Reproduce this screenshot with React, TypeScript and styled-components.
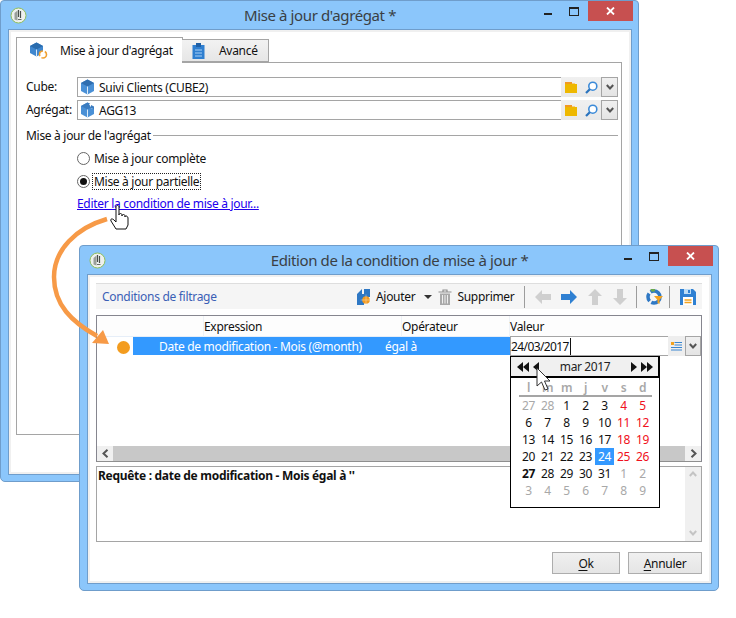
import React from "react";
import styled, { createGlobalStyle } from "styled-components";

const GlobalStyle = createGlobalStyle`
  html, body {
    margin: 0;
    padding: 0;
    background: #fff;
  }
  body {
    font-family: "Noto Sans", "Open Sans", sans-serif;
    font-size: 12px;
    letter-spacing: -0.3px;
    color: #111;
  }
`;

const Desktop = styled.div`
  position: relative;
  width: 736px;
  height: 618px;
  overflow: hidden;
`;

const Window = styled.div<{ $left: number; $top: number; $width: number; $height: number }>`
  position: absolute;
  left: ${(p) => p.$left}px;
  top: ${(p) => p.$top}px;
  width: ${(p) => p.$width}px;
  height: ${(p) => p.$height}px;
  box-sizing: border-box;
  display: flex;
  flex-direction: column;
  padding: 0 6px 6px 7px;
  background: #8bc6fb;
  border: 1px solid #6f9dcb;
  border-radius: 4px 4px 5px 5px;
`;

const TitleBar = styled.div`
  position: relative;
  flex: 0 0 28px;
  display: flex;
  align-items: center;
  justify-content: center;
`;

const TitleText = styled.div`
  font-size: 15px;
  letter-spacing: -0.38px;
  color: #3a3f44;
  margin-top: -1px;
`;

const AppBadge = styled.svg`
  position: absolute;
  left: 2px;
  top: 6px;
`;

const Controls = styled.div`
  position: absolute;
  right: -1px;
  top: 0;
  display: flex;
  align-items: flex-start;
`;

const MinBtn = styled.div`
  width: 8px;
  height: 2px;
  margin: 12px 17px 0 0;
  background: #222;
`;

const MaxBtn = styled.div`
  width: 8px;
  height: 6px;
  margin: 6px 9px 0 0;
  border: 1px solid #222;
  border-top-width: 2px;
`;

const CloseBtn = styled.div`
  width: 45px;
  height: 20px;
  background: #c75050;
  color: #fff;
  display: flex;
  align-items: center;
  justify-content: center;
`;

const Client = styled.div`
  flex: 1;
  min-height: 0;
  box-sizing: border-box;
  display: flex;
  flex-direction: column;
  background: #fff;
  border: 1px solid #6f9dcb;
  outline: 2px solid #f0f0f0;
  outline-offset: -3px;
`;

const TabArea = styled.div`
  flex: 1;
  display: flex;
  flex-direction: column;
  padding: 7px 9px 39px 7px;
  min-height: 0;
`;

const TabStrip = styled.div`
  display: flex;
  align-items: flex-end;
  height: 25px;
  position: relative;
  z-index: 1;
`;

const Tab = styled.div<{ $active?: boolean }>`
  box-sizing: border-box;
  display: flex;
  align-items: center;
  height: ${(p) => (p.$active ? 26 : 23)}px;
  width: ${(p) => (p.$active ? 167 : 87)}px;
  margin-bottom: ${(p) => (p.$active ? -1 : 0)}px;
  margin-right: ${(p) => (p.$active ? -1 : 0)}px;
  padding-left: ${(p) => (p.$active ? 13 : 10)}px;
  gap: ${(p) => (p.$active ? 12 : 14)}px;
  border: 1px solid #a5a5a5;
  border-bottom: ${(p) => (p.$active ? "0" : "1px solid #a5a5a5")};
  background: ${(p) => (p.$active ? "#fff" : "linear-gradient(#f2f2f2, #e6e6e6)")};
  border-left-width: ${(p) => (p.$active ? "1px" : "0")};
`;

const TabPanel = styled.div`
  flex: 1;
  box-sizing: border-box;
  border: 1px solid #a5a5a5;
  padding: 14px 3px 0 9px;
  display: flex;
  flex-direction: column;
`;

const FieldRow = styled.div`
  display: flex;
  align-items: stretch;
  height: 20px;
  margin-bottom: 3px;
`;

const FieldLabel = styled.div`
  width: 51px;
  flex: none;
  line-height: 20px;
`;

const FieldInput = styled.div`
  flex: 1;
  box-sizing: border-box;
  display: flex;
  align-items: center;
  gap: 4px;
  padding-left: 2px;
  border: 1px solid #a5a5a5;
  border-right: 0;
`;

const FieldTools = styled.div`
  width: 40px;
  flex: none;
  display: flex;
  align-items: center;
  gap: 8px;
  padding-left: 4px;
  box-sizing: border-box;
  background: linear-gradient(#f0f0f0, #e9e9e9);
`;

const DropButton = styled.div<{ $w?: number }>`
  width: ${(p) => p.$w ?? 17}px;
  flex: none;
  box-sizing: border-box;
  display: flex;
  align-items: center;
  justify-content: center;
  border: 1px solid #a5a5a5;
  background: linear-gradient(#f0f0f0, #e4e4e4);
`;

const SectionTitle = styled.div`
  display: flex;
  align-items: center;
  gap: 2px;
  height: 18px;
  margin-top: 3px;
  &::after {
    content: "";
    flex: 1;
    height: 1px;
    margin-top: 1px;
    background: #a5a5a5;
  }
`;

const Options = styled.div`
  display: flex;
  flex-direction: column;
  align-items: flex-start;
  padding: 3px 0 0 51px;
`;

const RadioRow = styled.div`
  display: flex;
  align-items: center;
  height: 23px;
  gap: 2px;
`;

const RadioDot = styled.span<{ $checked?: boolean }>`
  width: 13px;
  height: 13px;
  box-sizing: border-box;
  border-radius: 50%;
  border: 1px solid #666;
  background: #fff;
  display: flex;
  align-items: center;
  justify-content: center;
  &::after {
    content: "";
    width: 7px;
    height: 7px;
    border-radius: 50%;
    background: ${(p) => (p.$checked ? "#111" : "transparent")};
  }
`;

const RadioLabel = styled.span<{ $focused?: boolean }>`
  padding: 0 1px;
  line-height: 15px;
  border: 1px dotted ${(p) => (p.$focused ? "#222" : "transparent")};
`;

const LinkText = styled.a`
  margin-top: 1px;
  color: #2200ee;
  text-decoration: underline;
  line-height: 19px;
`;

const DialogBody = styled.div`
  flex: 1;
  display: flex;
  flex-direction: column;
  padding: 8px 9px 9px 8px;
  min-height: 0;
`;

const Toolbar = styled.div`
  position: relative;
  height: 26px;
  flex: none;
  box-sizing: border-box;
  display: flex;
  align-items: center;
  padding-left: 6px;
  background: #f5f5f5;
  border-top: 1px solid #dedede;
`;

const ToolbarTitle = styled.div`
  color: #3b5fb5;
  width: 255px;
`;

const ToolItem = styled.div<{ $gap?: number; $ml?: number }>`
  display: flex;
  align-items: center;
  gap: ${(p) => p.$gap ?? 5}px;
  margin-left: ${(p) => p.$ml ?? 0}px;
`;

const ToolSep = styled.div<{ $ml: number }>`
  width: 1px;
  height: 22px;
  margin-left: ${(p) => p.$ml}px;
  background: #9c9c9c;
`;

const ListBox = styled.div`
  position: relative;
  margin-top: 6px;
  height: 147px;
  flex: none;
  box-sizing: border-box;
  border: 1px solid #86868f;
  border-bottom-color: #8f8f8f;
  display: flex;
  flex-direction: column;
`;

const ListHead = styled.div`
  height: 20px;
  flex: none;
  display: grid;
  grid-template-columns: 106px 198px 108px 1fr;
  border-bottom: 1px solid #e6eef8;
  background: #fdfdfd;
`;

const HeadCell = styled.div`
  line-height: 22px;
  border-left: 1px solid #eef2f7;
  &:first-child {
    border-left: 0;
  }
`;

const ListRow = styled.div`
  height: 20px;
  flex: none;
  display: flex;
  align-items: stretch;
`;

const StatusCell = styled.div`
  width: 36px;
  flex: none;
  display: flex;
  align-items: center;
  justify-content: flex-end;
  padding-right: 3px;
  box-sizing: border-box;
  &::after {
    content: "";
    width: 13px;
    height: 13px;
    border-radius: 50%;
    background: #f39c1f;
  }
`;

const SelectedCell = styled.div`
  width: 377px;
  height: 18px;
  flex: none;
  box-sizing: border-box;
  display: flex;
  align-items: center;
  padding-left: 26px;
  background: #3399ff;
  color: #fff;
`;

const SelectedName = styled.span`
  width: 226px;
  flex: none;
`;

const ValueEditor = styled.div`
  flex: 1;
  display: flex;
  align-items: stretch;
  margin-top: -1px;
  height: 20px;
`;

const ValueInput = styled.div`
  width: 158px;
  flex: none;
  box-sizing: border-box;
  display: flex;
  align-items: center;
  border: 1px solid #a5a5a5;
  border-right: 0;
  letter-spacing: -0.6px;
`;

const Caret = styled.span`
  width: 1px;
  height: 17px;
  margin-left: 1px;
  background: #111;
`;

const ValueTools = styled.div`
  flex: 1;
  display: flex;
  align-items: center;
  padding-left: 3px;
  background: #eeeeee;
`;

const ListFiller = styled.div`
  flex: 1;
`;

const HScroll = styled.div`
  height: 15px;
  flex: none;
  display: flex;
  align-items: stretch;
  background: #c8c8c8;
`;

const ScrollEnd = styled.div`
  width: 16px;
  flex: none;
  display: flex;
  align-items: center;
  justify-content: center;
  background: #f0f0f0;
`;

const ScrollTrack = styled.div`
  flex: 1;
`;

const QueryBox = styled.div`
  margin-top: 4px;
  height: 76px;
  flex: none;
  box-sizing: border-box;
  border: 1px solid #a5a5a5;
  display: flex;
`;

const QueryText = styled.div`
  flex: 1;
  padding: 1px 0 0 1px;
  font-weight: 700;
  line-height: 15px;
`;

const VScroll = styled.div`
  width: 16px;
  flex: none;
  display: flex;
  flex-direction: column;
  align-items: center;
  justify-content: space-between;
  padding: 4px 0 5px;
  box-sizing: border-box;
  background: #f0f0f0;
`;

const DialogActions = styled.div`
  display: flex;
  justify-content: flex-end;
  gap: 8px;
  margin-top: 10px;
`;

const ActionButton = styled.button<{ $w: number }>`
  width: ${(p) => p.$w}px;
  height: 22px;
  padding: 0;
  box-sizing: border-box;
  font: inherit;
  letter-spacing: inherit;
  color: #111;
  border: 1px solid #adadad;
  background: linear-gradient(#f0f0f0, #e5e5e5);
  & u {
    text-underline-offset: 2px;
  }
`;

const Calendar = styled.div`
  position: absolute;
  left: 413px;
  top: 40px;
  width: 150px;
  height: 152px;
  box-sizing: border-box;
  background: #fff;
  border: 1px solid #000;
  display: flex;
  flex-direction: column;
  z-index: 2;
  letter-spacing: -0.4px;
`;

const CalendarHead = styled.div`
  height: 21px;
  flex: none;
  box-sizing: border-box;
  display: flex;
  align-items: center;
  justify-content: space-between;
  padding: 0 5px 0 6px;
  background: #f0f0f0;
  border-bottom: 2px solid #000;
  border-right: 1px solid #000;
  color: #222;
`;

const NavGroup = styled.div`
  display: flex;
  align-items: center;
  gap: 4px;
`;

const DayGrid = styled.div`
  display: grid;
  grid-template-columns: repeat(7, 19px);
  grid-template-rows: 15px 2px repeat(6, 17px);
  padding: 2px 0 0 8px;
`;

const WeekDay = styled.div`
  display: flex;
  align-items: center;
  justify-content: center;
  color: #a8a8a8;
  font-weight: 600;
`;

const WeekRule = styled.div`
  grid-column: 1 / -1;
  background: #a5a5a5;
`;

const Day = styled.div<{ $kind?: "muted" | "weekend" | "selected" | "today" }>`
  display: flex;
  align-items: center;
  justify-content: center;
  color: ${(p) =>
    p.$kind === "muted" ? "#a8a8a8" : p.$kind === "weekend" ? "#f01020" : p.$kind === "selected" ? "#fff" : "#111"};
  background: ${(p) => (p.$kind === "selected" ? "#3399ff" : "transparent")};
  font-weight: ${(p) => (p.$kind === "today" ? 700 : 400)};
`;

const Overlay = styled.svg`
  position: absolute;
  left: 0;
  top: 0;
  pointer-events: none;
  z-index: 5;
`;

const weekDays = ["l", "m", "m", "j", "v", "s", "d"];

type DayCell = { n: number; kind?: "muted" | "weekend" | "selected" | "today" };

const days: DayCell[] = [
  { n: 27, kind: "muted" }, { n: 28, kind: "muted" }, { n: 1 }, { n: 2 }, { n: 3 }, { n: 4, kind: "weekend" }, { n: 5, kind: "weekend" },
  { n: 6 }, { n: 7 }, { n: 8 }, { n: 9 }, { n: 10 }, { n: 11, kind: "weekend" }, { n: 12, kind: "weekend" },
  { n: 13 }, { n: 14 }, { n: 15 }, { n: 16 }, { n: 17 }, { n: 18, kind: "weekend" }, { n: 19, kind: "weekend" },
  { n: 20 }, { n: 21 }, { n: 22 }, { n: 23 }, { n: 24, kind: "selected" }, { n: 25, kind: "weekend" }, { n: 26, kind: "weekend" },
  { n: 27, kind: "today" }, { n: 28 }, { n: 29 }, { n: 30 }, { n: 31 }, { n: 1, kind: "muted" }, { n: 2, kind: "muted" },
  { n: 3, kind: "muted" }, { n: 4, kind: "muted" }, { n: 5, kind: "muted" }, { n: 6, kind: "muted" }, { n: 7, kind: "muted" }, { n: 8, kind: "muted" }, { n: 9, kind: "muted" },
];

const Badge = () => (
  <AppBadge width="17" height="17" viewBox="0 0 17 17">
    <circle cx="8.5" cy="8.5" r="7.5" fill="#eef0ee" stroke="#8fbf5a" strokeWidth="1" />
    <path d="M4.500 6v6.500l3 1V3.500z" fill="#9a9f9a" />
    <path d="M8.500 3v7M10.500 4v7" stroke="#4a4f4a" strokeWidth="1.200" fill="none" />
    <path d="M8 12.500h3.500" stroke="#6a6f6a" strokeWidth="1" />
  </AppBadge>
);

const CloseIcon = () => (
  <svg width="9" height="8" viewBox="0 0 9 8">
    <path d="M1 0.5l7 7M8 0.5l-7 7" stroke="#fff" strokeWidth="1.8" />
  </svg>
);

const Controlset = () => (
  <Controls>
    <MinBtn />
    <MaxBtn />
    <CloseBtn>
      <CloseIcon />
    </CloseBtn>
  </Controls>
);

const CubeIcon = ({ broken }: { broken?: boolean }) => (
  <svg width="15" height="16" viewBox="0 0 15 16">
    <path d="M7.5 0.5L14 4v8l-6.5 3.5L1 12V4z" fill="#4a90d6" />
    <path d="M7.5 0.5L14 4l-6.5 3.5L1 4z" fill={broken ? "#3b7cc0" : "#2f6eb0"} />
    <path d="M7.5 7.5V15.5" stroke="#dcebf8" strokeWidth="1" />
    {broken && <path d="M9 2l6 0 0 4-3 1z" fill="#fff" />}
    {broken && <path d="M11 3l3 1.500v3l-3-1.500z" fill="#3b7cc0" />}
  </svg>
);

const TabCubeIcon = () => (
  <svg width="18" height="17" viewBox="0 0 18 17">
    <path d="M6.500 0.500L13 4v7l-6.500 3.500L0 11V4z" fill="#3f87cf" />
    <path d="M6.500 0.500L13 4 6.500 7.500 0 4z" fill="#2a6cae" />
    <path d="M6.500 7.500v7" stroke="#dcebf8" />
    <circle cx="13" cy="12.500" r="3.500" fill="#fff" stroke="#f0a030" strokeWidth="1.600" strokeDasharray="7 2" />
  </svg>
);

const ClipboardIcon = () => (
  <svg width="13" height="16" viewBox="0 0 13 16">
    <rect x="0.500" y="2" width="12" height="14" fill="#2f7fd0" />
    <rect x="4" y="0" width="5" height="4" fill="#1f5fa5" />
    <path d="M3 7h7M3 10h7M3 13h7" stroke="#a8d0f5" strokeWidth="1" />
  </svg>
);

const FolderIcon = () => (
  <svg width="12" height="11" viewBox="0 0 12 11">
    <path d="M0 0h7v2H0z" fill="#f19a22" />
    <path d="M7 1h3v1H7z" fill="#f6cd7a" />
    <path d="M0 2h12v9H0z" fill="#eeb800" />
  </svg>
);

const SearchIcon = () => (
  <svg width="13" height="13" viewBox="0 0 13 13">
    <circle cx="7.800" cy="5.200" r="4" fill="#fff" stroke="#3b8ad8" strokeWidth="1.600" />
    <path d="M4.800 8.200L1 12" stroke="#2a73bd" strokeWidth="2.200" />
  </svg>
);

const Chevron = ({ color = "#555", up }: { color?: string; up?: boolean }) => (
  <svg width="8" height="6" viewBox="0 0 8 6">
    <path d={up ? "M0.800 5L4 1.500 7.200 5" : "M0.800 1L4 4.500 7.200 1"} stroke={color} strokeWidth="2" fill="none" />
  </svg>
);

const SideChevron = ({ right }: { right?: boolean }) => (
  <svg width="7" height="9" viewBox="0 0 7 9">
    <path d={right ? "M1.500 0.800L5.500 4.500 1.500 8.200" : "M5.500 0.800L1.500 4.500 5.500 8.200"} stroke="#555" strokeWidth="2" fill="none" />
  </svg>
);

const AddIcon = () => (
  <svg width="14" height="16" viewBox="0 0 14 16">
    <path d="M0 5l5-5v5h2V0h6v8H7v8H0z" fill="#2f78c4" />
    <circle cx="9" cy="11" r="3.800" fill="#f39a1e" />
    <path d="M9 5.500v11M3.500 11h11" stroke="#fff" strokeWidth="0.700" opacity="0.500" />
  </svg>
);

const TrashIcon = () => (
  <svg width="14" height="16" viewBox="0 0 14 16">
    <path d="M0.500 3h13M5 3V1h4v2" stroke="#8f8f8f" strokeWidth="1.200" fill="none" />
    <path d="M2 4.500h10V16H2z" fill="#a9a9a9" />
    <path d="M4.500 6v8.500M7 6v8.500M9.500 6v8.500" stroke="#eee" strokeWidth="1" />
  </svg>
);

const CaretDown = () => (
  <svg width="8" height="4" viewBox="0 0 8 4">
    <path d="M0 0h8L4 4z" fill="#333" />
  </svg>
);

const ArrowIcon = ({ dir, color }: { dir: "left" | "right" | "up" | "down"; color: string }) => {
  const rotate = { right: 0, down: 90, left: 180, up: 270 }[dir];
  return (
    <svg width="16" height="16" viewBox="0 0 16 16">
      <path d="M0 5h9V1l7 7-7 7v-4H0z" fill={color} transform={`rotate(${rotate} 8 8)`} />
    </svg>
  );
};

const ChartFilterIcon = () => (
  <svg width="17" height="16" viewBox="0 0 17 16">
    <circle cx="8" cy="8" r="6" fill="none" stroke="#2f78c4" strokeWidth="3.500" strokeDasharray="12 2 8 2 13 2" />
    <path d="M5 1.500A7 7 0 0 1 9 1" stroke="#6aa84f" strokeWidth="3" fill="none" />
    <path d="M8 7h9l-3.500 4v4l-2-1v-3z" fill="#f3a21e" />
  </svg>
);

const SaveIcon = () => (
  <svg width="16" height="16" viewBox="0 0 16 16">
    <path d="M0 0h13l3 3v13H0z" fill="#2f80d2" />
    <path d="M4 0h7v5H4z" fill="#bcdcf6" />
    <path d="M8 1h2v3H8z" fill="#2f80d2" />
    <path d="M3 8h10v8H3z" fill="#fff" />
    <path d="M4.500 11h7M4.500 13.500h7" stroke="#f3a21e" strokeWidth="1.300" />
  </svg>
);

const ListIcon = () => (
  <svg width="11" height="10" viewBox="0 0 11 10">
    <rect x="0" y="1" width="3" height="3" fill="#f3a21e" />
    <path d="M3.500 1.500h7.500M3.500 4h7.500M0 6.500h11M0 9h11" stroke="#3a86d0" strokeWidth="1.200" />
  </svg>
);

const NavArrows = ({ dir, count }: { dir: "left" | "right"; count: number }) => (
  <svg width={count * 6} height="10" viewBox={`0 0 ${count * 6} 10`}>
    {Array.from({ length: count }).map((_, i) => (
      <path
        key={i}
        d={dir === "left" ? `M${i * 6 + 6} 0v10L${i * 6} 5z` : `M${i * 6} 0v10L${i * 6 + 6} 5z`}
        fill="#111"
      />
    ))}
  </svg>
);

export default function App() {
  return (
    <Desktop>
      <GlobalStyle />
      <Window $left={0} $top={0} $width={639} $height={482}>
        <TitleBar>
          <Badge />
          <TitleText>Mise à jour d'agrégat *</TitleText>
          <Controlset />
        </TitleBar>
        <Client>
          <TabArea>
            <TabStrip>
              <Tab $active>
                <TabCubeIcon />
                Mise à jour d'agrégat
              </Tab>
              <Tab>
                <ClipboardIcon />
                Avancé
              </Tab>
            </TabStrip>
            <TabPanel>
              <FieldRow>
                <FieldLabel>Cube:</FieldLabel>
                <FieldInput>
                  <CubeIcon />
                  Suivi Clients (CUBE2)
                </FieldInput>
                <FieldTools>
                  <FolderIcon />
                  <SearchIcon />
                </FieldTools>
                <DropButton>
                  <Chevron />
                </DropButton>
              </FieldRow>
              <FieldRow>
                <FieldLabel>Agrégat:</FieldLabel>
                <FieldInput>
                  <CubeIcon broken />
                  AGG13
                </FieldInput>
                <FieldTools>
                  <FolderIcon />
                  <SearchIcon />
                </FieldTools>
                <DropButton>
                  <Chevron />
                </DropButton>
              </FieldRow>
              <SectionTitle>Mise à jour de l'agrégat</SectionTitle>
              <Options>
                <RadioRow>
                  <RadioDot />
                  <RadioLabel>Mise à jour complète</RadioLabel>
                </RadioRow>
                <RadioRow>
                  <RadioDot $checked />
                  <RadioLabel $focused>Mise à jour partielle</RadioLabel>
                </RadioRow>
                <LinkText>Editer la condition de mise à jour...</LinkText>
              </Options>
            </TabPanel>
          </TabArea>
        </Client>
      </Window>

      <Window $left={79} $top={245} $width={640} $height={346}>
        <TitleBar>
          <Badge />
          <TitleText>Edition de la condition de mise à jour *</TitleText>
          <Controlset />
        </TitleBar>
        <Client>
          <DialogBody>
            <Toolbar>
              <ToolbarTitle>Conditions de filtrage</ToolbarTitle>
              <ToolItem>
                <AddIcon />
                Ajouter
              </ToolItem>
              <ToolItem $ml={9}>
                <CaretDown />
              </ToolItem>
              <ToolItem $ml={6}>
                <TrashIcon />
                Supprimer
              </ToolItem>
              <ToolSep $ml={10} />
              <ToolItem $ml={10}>
                <ArrowIcon dir="left" color="#cfcfcf" />
              </ToolItem>
              <ToolItem $ml={10}>
                <ArrowIcon dir="right" color="#2f80d2" />
              </ToolItem>
              <ToolItem $ml={10}>
                <ArrowIcon dir="up" color="#cfcfcf" />
              </ToolItem>
              <ToolItem $ml={9}>
                <ArrowIcon dir="down" color="#cfcfcf" />
              </ToolItem>
              <ToolSep $ml={8} />
              <ToolItem $ml={9}>
                <ChartFilterIcon />
              </ToolItem>
              <ToolSep $ml={6} />
              <ToolItem $ml={10}>
                <SaveIcon />
              </ToolItem>
            </Toolbar>
            <ListBox>
              <ListHead>
                <HeadCell />
                <HeadCell>Expression</HeadCell>
                <HeadCell>Opérateur</HeadCell>
                <HeadCell>Valeur</HeadCell>
              </ListHead>
              <ListRow>
                <StatusCell />
                <SelectedCell>
                  <SelectedName>Date de modification - Mois (@month)</SelectedName>
                  égal à
                </SelectedCell>
                <ValueEditor>
                  <ValueInput>
                    24/03/2017
                    <Caret />
                  </ValueInput>
                  <ValueTools>
                    <ListIcon />
                  </ValueTools>
                  <DropButton $w={16}>
                    <Chevron />
                  </DropButton>
                </ValueEditor>
              </ListRow>
              <ListFiller />
              <HScroll>
                <ScrollEnd>
                  <SideChevron />
                </ScrollEnd>
                <ScrollTrack />
                <ScrollEnd>
                  <SideChevron right />
                </ScrollEnd>
              </HScroll>
              <Calendar>
                <CalendarHead>
                  <NavGroup>
                    <NavArrows dir="left" count={2} />
                    <NavArrows dir="left" count={1} />
                  </NavGroup>
                  <span>mar 2017</span>
                  <NavGroup>
                    <NavArrows dir="right" count={1} />
                    <NavArrows dir="right" count={2} />
                  </NavGroup>
                </CalendarHead>
                <DayGrid>
                  {weekDays.map((d, i) => (
                    <WeekDay key={i}>{d}</WeekDay>
                  ))}
                  <WeekRule />
                  {days.map((d, i) => (
                    <Day key={i} $kind={d.kind}>
                      {d.n}
                    </Day>
                  ))}
                </DayGrid>
              </Calendar>
            </ListBox>
            <QueryBox>
              <QueryText>Requête : date de modification - Mois égal à ''</QueryText>
              <VScroll>
                <Chevron color="#c4c4c4" up />
                <Chevron color="#c4c4c4" />
              </VScroll>
            </QueryBox>
            <DialogActions>
              <ActionButton $w={68}>
                <u>O</u>k
              </ActionButton>
              <ActionButton $w={74}>
                <u>A</u>nnuler
              </ActionButton>
            </DialogActions>
          </DialogBody>
        </Client>
      </Window>

      <Overlay width="736" height="618" viewBox="0 0 736 618">
        <path d="M107 219C76 228 54 250 54 277C54 305 72 322 97 336" fill="none" stroke="#f79a47" strokeWidth="4.500" />
        <path d="M109 344L92 343L103 330z" fill="#f79a47" />
        <path
          d="M116 207c0-2 3-2 3 0v8c0-2 3-2 3 0v1c0-2 3-2 3 0v1c0-2 3-1 3 1v7l-2 4h-10l-5-8c-1-2 1-3 3-1l2 2z"
          fill="#fff"
          stroke="#111"
          strokeWidth="1"
        />
        <path d="M537 368V386L541.500 382L545 390L548 389L544.500 381L550 381z" fill="#fff" stroke="#333" strokeWidth="1" />
      </Overlay>
    </Desktop>
  );
}
